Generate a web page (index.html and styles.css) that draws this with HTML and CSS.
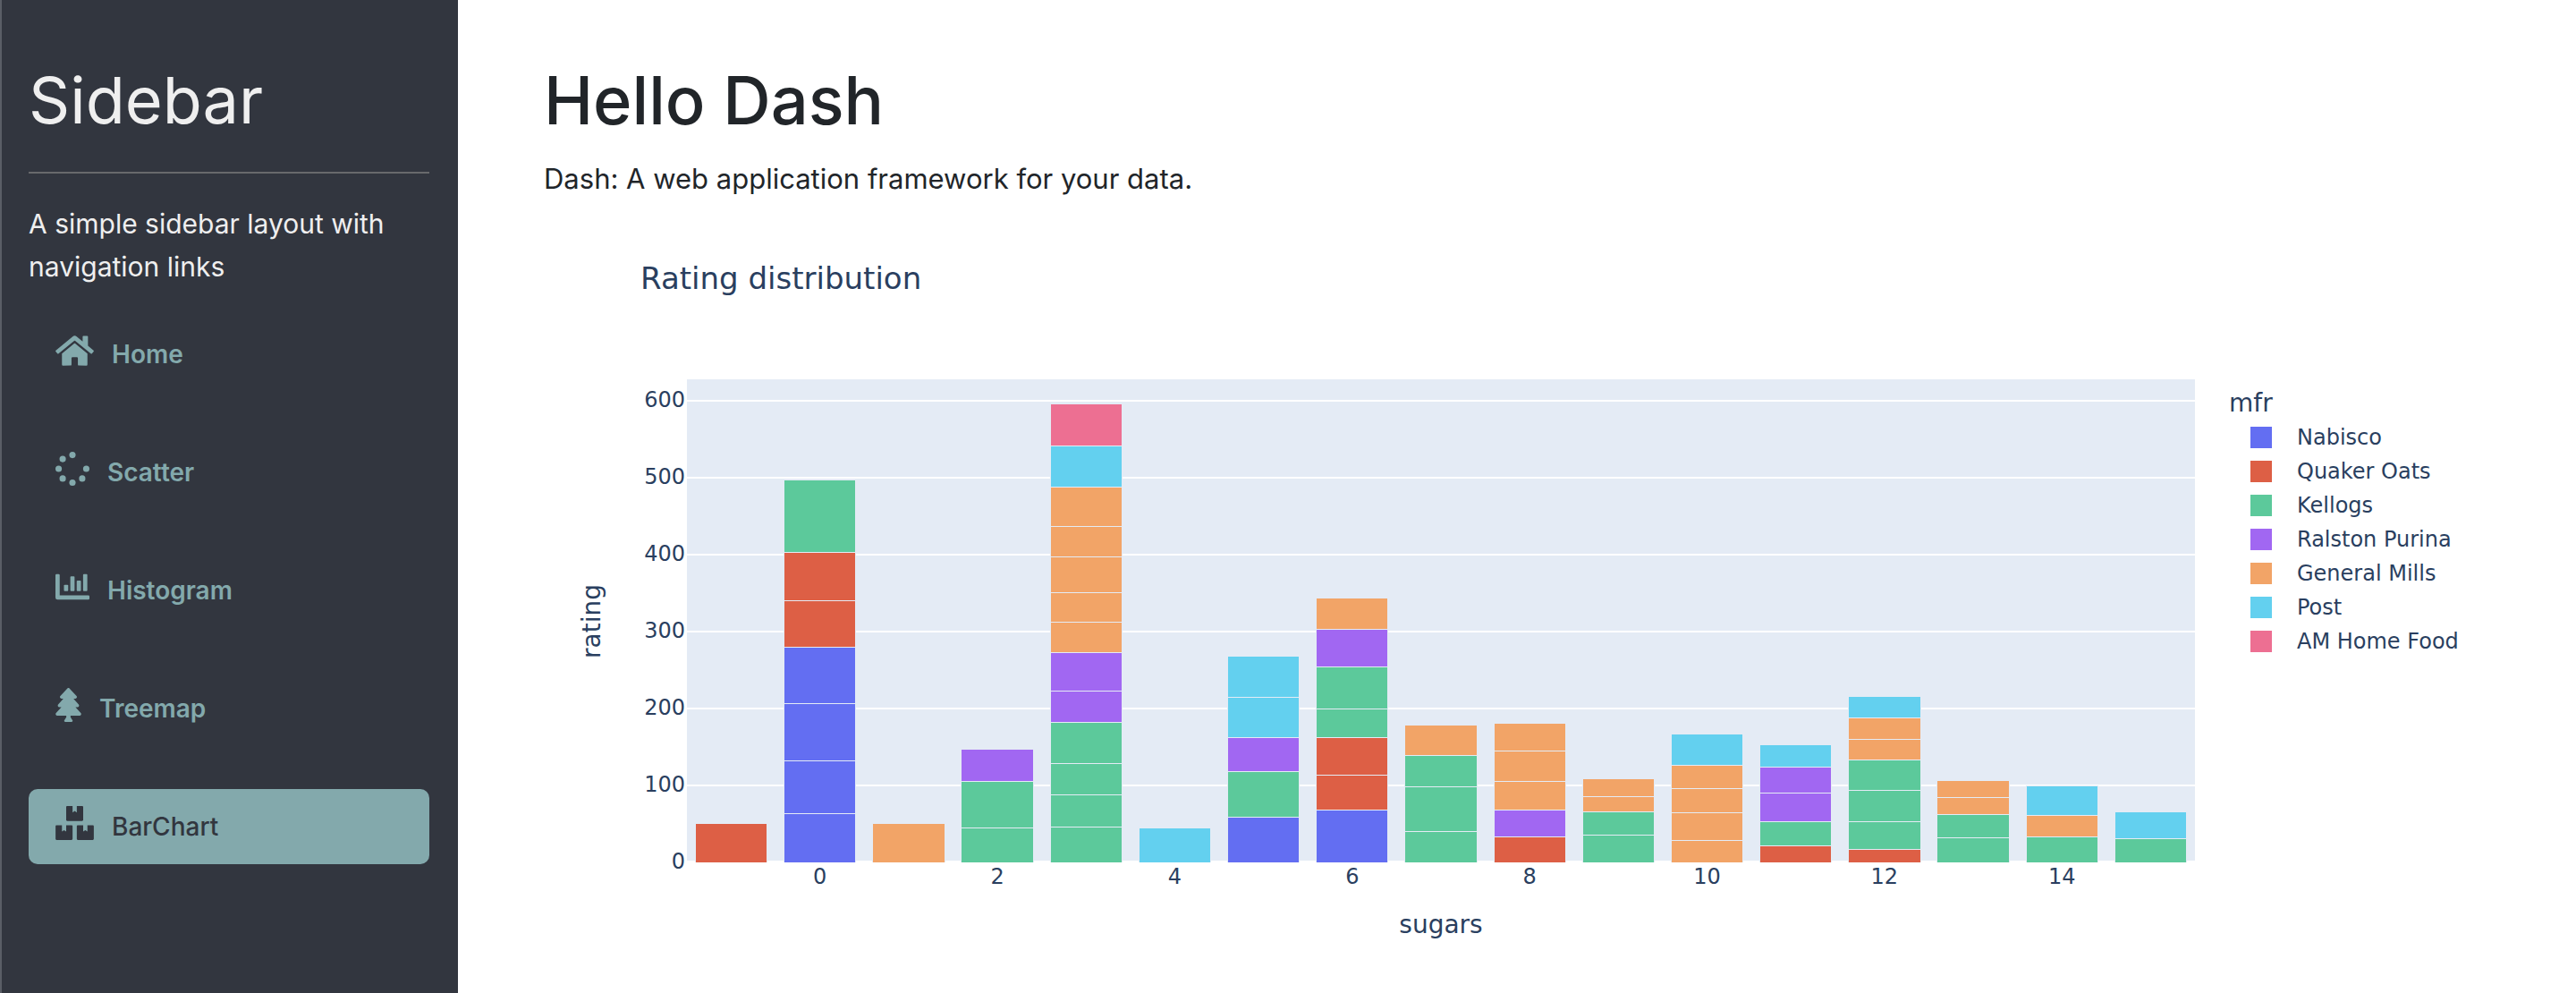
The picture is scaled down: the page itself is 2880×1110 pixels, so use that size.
FILE: index.html
```html
<!DOCTYPE html>
<html lang="en">
<head>
<meta charset="utf-8">
<title>Hello Dash</title>
<link rel="stylesheet" href="styles.css">
</head>
<body>
<div class="app">
  <aside class="sidebar">
    <h2 class="sidebar-title">Sidebar</h2>
    <hr class="sidebar-rule">
    <p class="lead">A simple sidebar layout with navigation links</p>
    <nav class="nav">
      <a class="nav-link" href="#home">
        <svg class="icon icon-wide" viewBox="0 0 576 512" aria-hidden="true"><path d="M280.37 148.26L96 300.11V464a16 16 0 0 0 16 16l112.06-.29a16 16 0 0 0 15.92-16V368a16 16 0 0 1 16-16h64a16 16 0 0 1 16 16v95.64a16 16 0 0 0 16 16.05L464 480a16 16 0 0 0 16-16V300L295.67 148.26a12.19 12.19 0 0 0-15.3 0zM571.6 251.47L488 182.56V44.05a12 12 0 0 0-12-12h-56a12 12 0 0 0-12 12v72.61L318.47 43a48 48 0 0 0-61 0L4.34 251.47a12 12 0 0 0-1.6 16.9l25.5 31A12 12 0 0 0 45.15 301l235.22-193.74a12.19 12.19 0 0 1 15.3 0L530.9 301a12 12 0 0 0 16.9-1.6l25.5-31a12 12 0 0 0-1.7-16.93z"/></svg>
        <span>Home</span>
      </a>
      <a class="nav-link" href="#scatter">
        <svg class="icon" viewBox="0 0 512 512" aria-hidden="true"><circle cx="256" cy="48" r="48"/><circle cx="256" cy="464" r="48"/><circle cx="48" cy="256" r="48"/><circle cx="464" cy="256" r="48"/><circle cx="109" cy="109" r="48"/><circle cx="109" cy="403" r="48"/><circle cx="403" cy="403" r="48"/></svg>
        <span>Scatter</span>
      </a>
      <a class="nav-link" href="#histogram">
        <svg class="icon" viewBox="0 0 512 512" aria-hidden="true"><path d="M16 64h32a16 16 0 0 1 16 16v304h432a16 16 0 0 1 16 16v32a16 16 0 0 1-16 16H32a32 32 0 0 1-32-32V80a16 16 0 0 1 16-16z"/><rect x="128" y="224" width="64" height="96" rx="12"/><rect x="224" y="96" width="64" height="224" rx="12"/><rect x="320" y="160" width="64" height="160" rx="12"/><rect x="416" y="64" width="64" height="256" rx="12"/></svg>
        <span>Histogram</span>
      </a>
      <a class="nav-link" href="#treemap">
        <svg class="icon icon-narrow" viewBox="0 0 384 512" aria-hidden="true"><path d="M378.31 378.49L298.42 288h30.63c9.01 0 16.98-5 20.78-13.06 3.8-8.04 2.55-17.26-3.28-24.05L268.42 160h28.89c9.1 0 17.3-5.35 20.86-13.61 3.52-8.13 1.86-17.59-4.24-24.08L203.66 4.83c-6.03-6.45-17.28-6.45-23.32 0L70.06 122.31c-6.1 6.49-7.75 15.95-4.24 24.08C69.38 154.65 77.59 160 86.69 160h28.89l-78.14 90.91c-5.81 6.78-7.06 15.99-3.27 24.04C37.97 283 45.93 288 54.95 288h30.63L5.69 378.49c-6 6.79-7.36 16.09-3.56 24.26 3.75 8.05 12 13.25 21.01 13.25H160v24.45l-30.29 48.4c-5.32 10.64 2.42 23.16 14.31 23.16h95.96c11.89 0 19.63-12.52 14.31-23.16L224 440.45V416h136.86c9.01 0 17.26-5.2 21.01-13.25 3.8-8.17 2.44-17.47-3.56-24.26z"/></svg>
        <span>Treemap</span>
      </a>
      <a class="nav-link active" href="#barchart" aria-current="page">
        <svg class="icon icon-wide" viewBox="0 0 576 512" aria-hidden="true"><path d="M560 288h-80v96l-32-21.3-32 21.3v-96h-80c-8.8 0-16 7.2-16 16v192c0 8.8 7.2 16 16 16h224c8.8 0 16-7.2 16-16V304c0-8.8-7.2-16-16-16zm-384-64h224c8.8 0 16-7.2 16-16V16c0-8.8-7.2-16-16-16h-80v96l-32-21.3L256 96V0h-80c-8.8 0-16 7.2-16 16v192c0 8.8 7.2 16 16 16zm64 64h-80v96l-32-21.3L96 384v-96H16c-8.8 0-16 7.2-16 16v192c0 8.8 7.2 16 16 16h224c8.8 0 16-7.2 16-16V304c0-8.8-7.2-16-16-16z"/></svg>
        <span>BarChart</span>
      </a>
    </nav>
  </aside>

  <main class="content">
    <h1 class="page-title">Hello Dash</h1>
    <p class="lead">Dash: A web application framework for your data.</p>

    <figure class="chart">
      <figcaption class="chart-title">Rating distribution</figcaption>

      <div class="y-title"><span>rating</span></div>
      <div class="y-axis">
        <span></span><span>600</span><span>500</span><span>400</span><span>300</span><span>200</span><span>100</span><span>0</span>
      </div>

      <div class="plot">
        <div class="gridlines"><i></i><i></i><i></i><i></i><i></i><i></i><i></i><i></i></div>
        <div class="bars">
          <div class="bar"><i class="quaker" style="--v:50.8"></i></div>
          <div class="bar"><i class="nabisco" style="--v:64.5"></i><i class="nabisco" style="--v:68.2"></i><i class="nabisco" style="--v:74.5"></i><i class="nabisco" style="--v:72.8"></i><i class="quaker" style="--v:60.8"></i><i class="quaker" style="--v:63"></i><i class="kellogs" style="--v:93.7"></i></div>
          <div class="bar"><i class="mills" style="--v:50.8"></i></div>
          <div class="bar"><i class="kellogs" style="--v:45.9"></i><i class="kellogs" style="--v:59.6"></i><i class="ralston" style="--v:42"></i></div>
          <div class="bar"><i class="kellogs" style="--v:46.9"></i><i class="kellogs" style="--v:41.5"></i><i class="kellogs" style="--v:40.6"></i><i class="kellogs" style="--v:53.1"></i><i class="ralston" style="--v:41.4"></i><i class="ralston" style="--v:49.8"></i><i class="mills" style="--v:39.2"></i><i class="mills" style="--v:38.8"></i><i class="mills" style="--v:46.7"></i><i class="mills" style="--v:39.1"></i><i class="mills" style="--v:51.6"></i><i class="post" style="--v:53.4"></i><i class="amhome" style="--v:54.9"></i></div>
          <div class="bar"><i class="post" style="--v:45.8"></i></div>
          <div class="bar"><i class="nabisco" style="--v:59.4"></i><i class="kellogs" style="--v:59.4"></i><i class="ralston" style="--v:44.3"></i><i class="post" style="--v:52.1"></i><i class="post" style="--v:53.3"></i></div>
          <div class="bar"><i class="nabisco" style="--v:68.4"></i><i class="quaker" style="--v:45.3"></i><i class="quaker" style="--v:49.5"></i><i class="kellogs" style="--v:36.5"></i><i class="kellogs" style="--v:55.3"></i><i class="ralston" style="--v:49.1"></i><i class="mills" style="--v:40"></i></div>
          <div class="bar"><i class="kellogs" style="--v:40.7"></i><i class="kellogs" style="--v:58.3"></i><i class="kellogs" style="--v:40.4"></i><i class="mills" style="--v:40.1"></i></div>
          <div class="bar"><i class="quaker" style="--v:34"></i><i class="ralston" style="--v:34.4"></i><i class="mills" style="--v:37"></i><i class="mills" style="--v:39.7"></i><i class="mills" style="--v:36.2"></i></div>
          <div class="bar"><i class="kellogs" style="--v:36.5"></i><i class="kellogs" style="--v:30.3"></i><i class="mills" style="--v:19.8"></i><i class="mills" style="--v:22.8"></i></div>
          <div class="bar"><i class="mills" style="--v:29.5"></i><i class="mills" style="--v:36.2"></i><i class="mills" style="--v:31.1"></i><i class="mills" style="--v:30.5"></i><i class="post" style="--v:40.3"></i></div>
          <div class="bar"><i class="quaker" style="--v:21.9"></i><i class="kellogs" style="--v:31.4"></i><i class="ralston" style="--v:37.1"></i><i class="ralston" style="--v:34.1"></i><i class="post" style="--v:28.7"></i></div>
          <div class="bar"><i class="quaker" style="--v:18"></i><i class="kellogs" style="--v:35.8"></i><i class="kellogs" style="--v:41"></i><i class="kellogs" style="--v:39.3"></i><i class="mills" style="--v:26.7"></i><i class="mills" style="--v:27.8"></i><i class="post" style="--v:28"></i></div>
          <div class="bar"><i class="kellogs" style="--v:32.2"></i><i class="kellogs" style="--v:30.2"></i><i class="mills" style="--v:22.7"></i><i class="mills" style="--v:21.9"></i></div>
          <div class="bar"><i class="kellogs" style="--v:33.2"></i><i class="mills" style="--v:28.6"></i><i class="post" style="--v:37.8"></i></div>
          <div class="bar"><i class="kellogs" style="--v:31.2"></i><i class="post" style="--v:35.3"></i></div>
        </div>
      </div>

      <div class="x-axis">
        <span></span><span>0</span><span></span><span>2</span><span></span><span>4</span><span></span><span>6</span><span></span><span>8</span><span></span><span>10</span><span></span><span>12</span><span></span><span>14</span><span></span>
      </div>
      <div class="x-title">sugars</div>

      <div class="legend">
        <div class="legend-title">mfr</div>
        <ul class="legend-list">
          <li><i class="swatch nabisco"></i>Nabisco</li>
          <li><i class="swatch quaker"></i>Quaker Oats</li>
          <li><i class="swatch kellogs"></i>Kellogs</li>
          <li><i class="swatch ralston"></i>Ralston Purina</li>
          <li><i class="swatch mills"></i>General Mills</li>
          <li><i class="swatch post"></i>Post</li>
          <li><i class="swatch amhome"></i>AM Home Food</li>
        </ul>
      </div>
    </figure>
  </main>
</div>
</body>
</html>
```
FILE: styles.css
```css
:root {
  --slate: #32363f;
  --teal: #83a9ac;
  --plot-bg: #e4ebf5;
  --chart-text: #2a3f5f;
}

* { box-sizing: border-box; }

body {
  margin: 0;
  background: #fff;
  color: #212529;
  font-family: Inter, "Liberation Sans", sans-serif;
  font-size: 30px;
  line-height: 48px;
}

.app {
  display: flex;
  min-height: 100vh;
}

/* Sidebar */
.sidebar {
  flex: none;
  width: 512px;
  padding: 64px 32px 64px 30px;
  border-left: 2px solid #5a5e66;
  background: var(--slate);
  color: #efefef;
}

.sidebar-title,
.page-title {
  margin: 0 0 16px;
  font-size: 74px;
  line-height: 96px;
  font-weight: 500;
}

.sidebar-title {
  font-size: 72px;
  font-weight: 400;
}

.sidebar-rule {
  height: 2px;
  margin: 32px 0;
  border: 0;
  background: #68696c;
}

.lead { margin: 0 0 32px; }

.nav {
  display: flex;
  flex-direction: column;
  gap: 48px;
}

.nav-link {
  display: flex;
  align-items: center;
  gap: 20px;
  height: 84px;
  padding: 0 30px;
  border-radius: 10px;
  color: var(--teal);
  font-size: 28px;
  font-weight: 600;
  text-decoration: none;
}

.nav-link.active {
  background: var(--teal);
  color: var(--slate);
  font-weight: 500;
}

.icon {
  flex: none;
  width: 38px;
  height: 38px;
  margin-bottom: 8px;
  fill: currentColor;
}

.icon-wide { width: 43px; }
.icon-narrow { width: 29px; }

/* Page content */
.content {
  flex: 1;
  min-width: 0;
  padding: 64px 64px 32px 96px;
}

.content .lead { font-size: 31px; }

/* Stacked bar chart */
.chart {
  display: grid;
  grid-template-columns: 76px 84px 1fr 362px;
  grid-template-rows: 168px 540px 40px auto;
  margin: 0;
  color: var(--chart-text);
  font-family: Verdana, "DejaVu Sans", sans-serif;
  font-size: 24px;
  line-height: 32px;
}

.chart-title {
  grid-column: 1 / -1;
  padding: 32px 108px;
  font-size: 34px;
  line-height: 46px;
}

.y-title {
  display: flex;
  align-items: center;
  justify-content: flex-end;
  padding-right: 6px;
  font-size: 28px;
}

.y-title span {
  writing-mode: vertical-rl;
  transform: rotate(180deg);
}

.y-axis,
.gridlines {
  display: grid;
  grid-template-rows: 28fr repeat(6, 100fr) 0;
}

.y-axis {
  padding-right: 2px;
  text-align: right;
}

.y-axis span {
  height: 32px;
  margin: -17px 0;
}

.plot {
  display: grid;
  background: var(--plot-bg);
}

.gridlines,
.bars { grid-area: 1 / 1; }

.gridlines i {
  height: 2px;
  margin-top: -1px;
  background: #fff;
}

.gridlines i:first-child { visibility: hidden; }
.gridlines i:last-child { margin-top: -2px; }

.bars {
  display: grid;
  grid-template-columns: repeat(17, 1fr);
  height: 540px;
}

.bar {
  display: flex;
  flex-direction: column-reverse;
  width: calc(80% + 2px);
  height: 100%;
  margin: 0 auto;
}

/* The vertical axis covers 0 to 628 */
.bar i {
  flex: none;
  height: calc(var(--v) / 628 * 100%);
  border: 1px solid var(--plot-bg);
  border-bottom: 0;
  background-clip: padding-box;
}

.nabisco { background-color: #636ef2; }
.quaker { background-color: #dd5f45; }
.kellogs { background-color: #5cc99b; }
.ralston { background-color: #a167f2; }
.mills { background-color: #f2a467; }
.post { background-color: #63d0ef; }
.amhome { background-color: #ed6f92; }

.x-axis {
  grid-column: 3;
  grid-row: 3;
  display: grid;
  grid-template-columns: repeat(17, 1fr);
  text-align: center;
}

.x-title {
  grid-column: 3;
  grid-row: 4;
  padding-top: 14px;
  font-size: 28px;
  text-align: center;
}

.legend {
  grid-column: 4;
  grid-row: 2;
  padding: 8px 0 0 38px;
}

.legend-title {
  font-size: 28px;
  line-height: 38px;
}

.legend-list {
  margin: 0;
  padding: 0 0 0 24px;
  list-style: none;
}

.legend-list li {
  display: flex;
  align-items: center;
  gap: 28px;
  line-height: 38px;
}

.swatch {
  width: 24px;
  height: 24px;
}
```
